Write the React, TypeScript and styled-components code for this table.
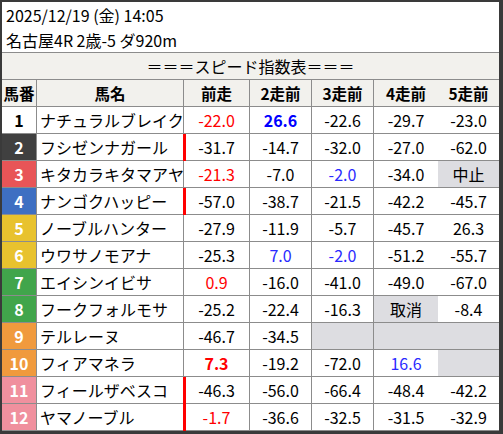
import React from "react";
import styled, { createGlobalStyle, css } from "styled-components";

const Global = createGlobalStyle`
  html, body { margin: 0; padding: 0; background: #fff; }
  body { font-family: "Noto Sans CJK JP", "Noto Sans", sans-serif; color: #000; }
`;

const Frame = styled.div`
  box-sizing: border-box;
  width: 503px;
  height: 434px;
  border-style: solid;
  border-color: #3a3a3a;
  border-width: 2px 4px 3px 2px;
  background: #fff;
  display: flex;
  flex-direction: column;
`;

const Info = styled.div`
  box-sizing: border-box;
  height: 51px;
  padding: 1px 4px 0;
  border-bottom: 1px solid #8c8c8c;
  font-size: 16px;
  line-height: 25px;
  display: flex;
  flex-direction: column;
`;

const Grid = styled.div`
  display: grid;
  grid-template-columns: 35px 147px 66px 62px 62px 64px 61px;
  grid-auto-rows: 27px;
`;

const cellBase = css`
  box-sizing: border-box;
  border-bottom: 1px solid #8c8c8c;
  border-right: 1px solid #8c8c8c;
  display: flex;
  align-items: center;
  font-size: 16px;
  white-space: nowrap;
  &:nth-child(7n) { border-right: none; }
`;

const Title = styled.div`
  grid-column: 1 / -1;
  box-sizing: border-box;
  border-bottom: 1px solid #8c8c8c;
  background: #f2f1ed;
  display: flex;
  align-items: center;
  justify-content: center;
  font-size: 16px;
`;

const HeadCell = styled.div<{ $last?: boolean }>`
  ${cellBase};
  background: #f2f1ed;
  justify-content: center;
  font-weight: 700;
  font-size: 15.5px;
  border-right: ${(p) => (p.$last ? "none" : "1px solid #8c8c8c")};
`;

const GateCell = styled.div<{ $bg: string; $fg: string }>`
  ${cellBase};
  justify-content: center;
  font-weight: 700;
  background: ${(p) => p.$bg};
  color: ${(p) => p.$fg};
`;

const NameCell = styled.div`
  ${cellBase};
  padding-left: 3px;
`;

const ValueCell = styled.div<{
  $color?: string;
  $bold?: boolean;
  $grey?: boolean;
  $bar?: boolean;
  $last?: boolean;
}>`
  ${cellBase};
  position: relative;
  justify-content: center;
  color: ${(p) => p.$color || "#000"};
  font-weight: ${(p) => (p.$bold ? 700 : 400)};
  background: ${(p) => (p.$grey ? "#dddde1" : "#fff")};
  border-right: ${(p) => (p.$last ? "none" : "1px solid #8c8c8c")};
  ${(p) =>
    p.$bar &&
    css`
      &::before {
        content: "";
        position: absolute;
        left: -1px;
        top: 0;
        bottom: -1px;
        width: 3px;
        background: #ff0000;
      }
    `}
`;

type V = { t?: string; c?: string; b?: boolean; g?: boolean; bar?: boolean };

const R = "#ff0000";
const B = "#0000ff";
const B2 = "#2a2aff";

const gates: Record<number, [string, string]> = {
  1: ["#ffffff", "#000"],
  2: ["#404040", "#fff"],
  3: ["#e85557", "#fff"],
  4: ["#3e6fc2", "#fff"],
  5: ["#e8c22e", "#fff"],
  6: ["#e8c22e", "#fff"],
  7: ["#41a54b", "#fff"],
  8: ["#41a54b", "#fff"],
  9: ["#f09a3d", "#fff"],
  10: ["#f09a3d", "#fff"],
  11: ["#f0909e", "#fff"],
  12: ["#f0909e", "#fff"],
};

const rows: { n: number; name: string; v: V[] }[] = [
  { n: 1, name: "ナチュラルブレイク", v: [{ t: "-22.0", c: R }, { t: "26.6", c: B, b: true }, { t: "-22.6" }, { t: "-29.7" }, { t: "-23.0" }] },
  { n: 2, name: "フシゼンナガール", v: [{ t: "-31.7", bar: true }, { t: "-14.7" }, { t: "-32.0" }, { t: "-27.0" }, { t: "-62.0" }] },
  { n: 3, name: "キタカラキタマアヤ", v: [{ t: "-21.3", c: R }, { t: "-7.0" }, { t: "-2.0", c: B2 }, { t: "-34.0" }, { t: "中止", g: true }] },
  { n: 4, name: "ナンゴクハッピー", v: [{ t: "-57.0", bar: true }, { t: "-38.7" }, { t: "-21.5" }, { t: "-42.2" }, { t: "-45.7" }] },
  { n: 5, name: "ノーブルハンター", v: [{ t: "-27.9" }, { t: "-11.9" }, { t: "-5.7" }, { t: "-45.7" }, { t: "26.3" }] },
  { n: 6, name: "ウワサノモアナ", v: [{ t: "-25.3" }, { t: "7.0", c: B2 }, { t: "-2.0", c: B2 }, { t: "-51.2" }, { t: "-55.7" }] },
  { n: 7, name: "エイシンイビサ", v: [{ t: "0.9", c: R }, { t: "-16.0" }, { t: "-41.0" }, { t: "-49.0" }, { t: "-67.0" }] },
  { n: 8, name: "フークフォルモサ", v: [{ t: "-25.2" }, { t: "-22.4" }, { t: "-16.3" }, { t: "取消", g: true }, { t: "-8.4" }] },
  { n: 9, name: "テルレーヌ", v: [{ t: "-46.7" }, { t: "-34.5" }, { g: true }, { g: true }, { g: true }] },
  { n: 10, name: "フィアマネラ", v: [{ t: "7.3", c: R, b: true }, { t: "-19.2" }, { t: "-72.0" }, { t: "16.6", c: B2 }, { g: true }] },
  { n: 11, name: "フィールザベスコ", v: [{ t: "-46.3", bar: true }, { t: "-56.0" }, { t: "-66.4" }, { t: "-48.4" }, { t: "-42.2" }] },
  { n: 12, name: "ヤマノーブル", v: [{ t: "-1.7", c: R, bar: true }, { t: "-36.6" }, { t: "-32.5" }, { t: "-31.5" }, { t: "-32.9" }] },
];

const heads = ["馬番", "馬名", "前走", "2走前", "3走前", "4走前", "5走前"];

export default function App() {
  return (
    <>
      <Global />
      <Frame>
        <Info>
          <span>2025/12/19 (金) 14:05</span>
          <span>名古屋4R 2歳-5 ダ920m</span>
        </Info>
        <Grid>
          <Title>＝＝＝スピード指数表＝＝＝</Title>
          {heads.map((h, i) => (
            <HeadCell key={h} $last={i === heads.length - 1}>
              {h}
            </HeadCell>
          ))}
          {rows.map((r) => (
            <React.Fragment key={r.n}>
              <GateCell $bg={gates[r.n][0]} $fg={gates[r.n][1]}>
                {r.n}
              </GateCell>
              <NameCell>{r.name}</NameCell>
              {r.v.map((v, i) => (
                <ValueCell
                  key={i}
                  $color={v.c}
                  $bold={v.b}
                  $grey={v.g}
                  $bar={v.bar}
                  $last={i === 4}
                >
                  {v.t}
                </ValueCell>
              ))}
            </React.Fragment>
          ))}
        </Grid>
      </Frame>
    </>
  );
}
